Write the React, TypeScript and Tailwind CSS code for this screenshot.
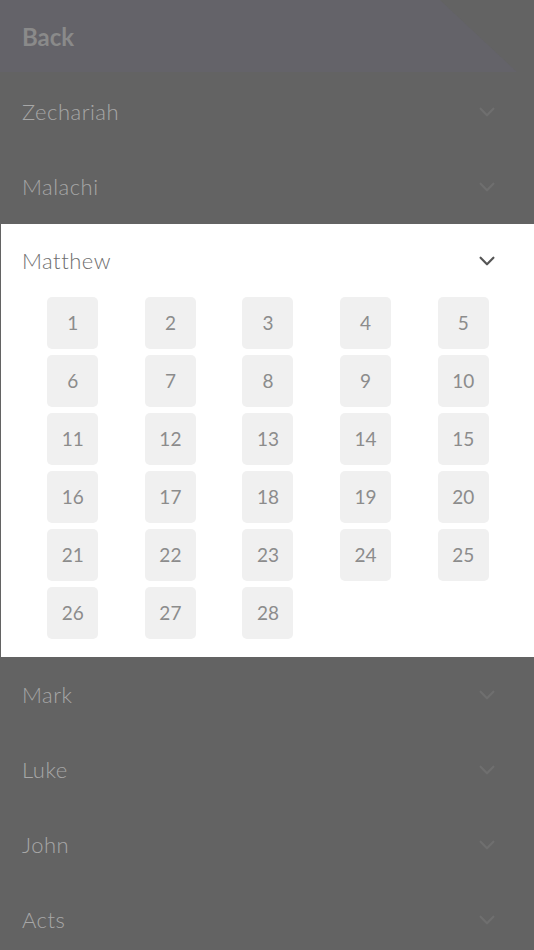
import React from 'react';

const font = { fontFamily: 'Lato, "Open Sans", sans-serif' };

const Chevron = ({ className }: { className: string }) => (
  <svg viewBox="0 0 24 24" className={className} fill="none" stroke="currentColor" strokeWidth={2.4} strokeLinecap="round" strokeLinejoin="round">
    <path d="M5 8.5l7 7 7-7" />
  </svg>
);

const Row = ({ name }: { name: string }) => (
  <div className="flex h-[75px] items-center justify-between pl-[22px] pr-[36px]">
    <span className="text-[22px] font-light tracking-[0.5px] text-[#a7a7a7]">{name}</span>
    <Chevron className="h-[22px] w-[22px] text-[#6f6f6f]" />
  </div>
);

export default function App() {
  const chapters = Array.from({ length: 28 }, (_, i) => i + 1);
  return (
    <div className="h-[950px] w-[534px] overflow-hidden bg-[#636363]" style={font}>
      <div className="relative h-[74px]">
        <div className="absolute inset-x-0 top-0 h-[72px] bg-[#646369] [clip-path:polygon(0_0,440px_0,517px_100%,0_100%)]" />
        <div className="relative flex h-[74px] items-center pl-[22px]">
          <span className="text-[24px] font-bold text-[#8a8a8a]">Back</span>
        </div>
      </div>
      <Row name="Zechariah" />
      <Row name="Malachi" />
      <div className="ml-px bg-white pb-[18px]">
        <div className="flex h-[73px] items-center justify-between pl-[21px] pr-[36px]">
          <span className="text-[22px] font-light tracking-[0.5px] text-[#6e6e6e]">Matthew</span>
          <Chevron className="h-[22px] w-[22px] text-[#555555]" />
        </div>
        <div className="grid grid-cols-5 gap-y-[6px] pl-[23px] pr-[22px]">
          {chapters.map(n => (
            <div key={n} className="flex justify-center">
              <div className="flex h-[52px] w-[51px] items-center justify-center rounded-[5px] bg-[#f0f0f0] text-[19px] text-[#8c8c8c]">
                {n}
              </div>
            </div>
          ))}
        </div>
      </div>
      <Row name="Mark" />
      <Row name="Luke" />
      <Row name="John" />
      <Row name="Acts" />
    </div>
  );
}
